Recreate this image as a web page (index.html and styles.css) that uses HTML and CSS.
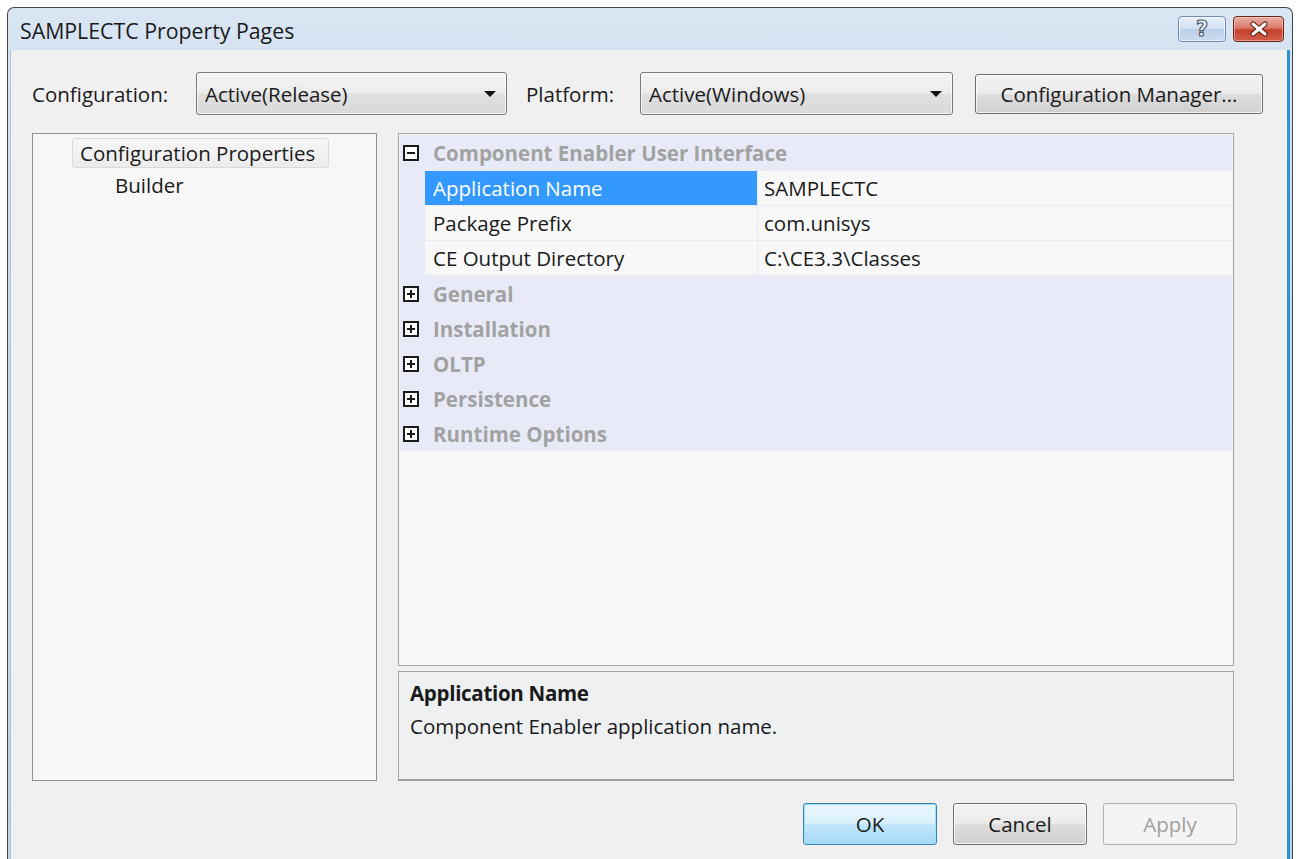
FILE: index.html
```html
<!DOCTYPE html>
<html lang="en">
<head>
<meta charset="utf-8">
<title>SAMPLECTC Property Pages</title>
<link rel="stylesheet" href="styles.css">
</head>
<body>
<div class="window">
  <div class="titlebar">
    <span class="title">SAMPLECTC Property Pages</span>
    <div class="caption-buttons">
      <div class="cap-btn help"><span>?</span></div>
      <div class="cap-btn close">
        <svg width="22" height="16" viewBox="0 0 22 16">
          <path d="M5 3 L17 13 M17 3 L5 13" stroke="#5a1b12" stroke-width="5" stroke-linecap="round"/>
          <path d="M5 3 L17 13 M17 3 L5 13" stroke="#ffffff" stroke-width="3" stroke-linecap="round"/>
        </svg>
      </div>
    </div>
  </div>
  <div class="client">
    <div class="config-row">
      <span class="label label-config">Configuration:</span>
      <div class="combo combo-config"><span>Active(Release)</span><i class="arrow"></i></div>
      <span class="label label-platform">Platform:</span>
      <div class="combo combo-platform"><span>Active(Windows)</span><i class="arrow"></i></div>
      <div class="btn btn-manager">Configuration Manager...</div>
    </div>

    <div class="panels">
      <div class="tree">
        <div class="tree-item selected">Configuration Properties</div>
        <div class="tree-item child">Builder</div>
      </div>

      <div class="right-col">
        <div class="grid">
          <div class="row category">
            <div class="margin"><i class="toggle minus"></i></div>
            <div class="cat-name">Component Enabler User Interface</div>
          </div>
          <div class="row prop">
            <div class="margin"></div>
            <div class="name active">Application Name</div>
            <div class="value">SAMPLECTC</div>
          </div>
          <div class="row prop">
            <div class="margin"></div>
            <div class="name">Package Prefix</div>
            <div class="value">com.unisys</div>
          </div>
          <div class="row prop">
            <div class="margin"></div>
            <div class="name">CE Output Directory</div>
            <div class="value">C:\CE3.3\Classes</div>
          </div>
          <div class="row category">
            <div class="margin"><i class="toggle plus"></i></div>
            <div class="cat-name">General</div>
          </div>
          <div class="row category">
            <div class="margin"><i class="toggle plus"></i></div>
            <div class="cat-name">Installation</div>
          </div>
          <div class="row category">
            <div class="margin"><i class="toggle plus"></i></div>
            <div class="cat-name">OLTP</div>
          </div>
          <div class="row category">
            <div class="margin"><i class="toggle plus"></i></div>
            <div class="cat-name">Persistence</div>
          </div>
          <div class="row category">
            <div class="margin"><i class="toggle plus"></i></div>
            <div class="cat-name">Runtime Options</div>
          </div>
        </div>
        <div class="description">
          <div class="desc-title">Application Name</div>
          <div class="desc-text">Component Enabler application name.</div>
        </div>
      </div>
    </div>

    <div class="actions">
      <div class="btn btn-action default">OK</div>
      <div class="btn btn-action">Cancel</div>
      <div class="btn btn-action disabled">Apply</div>
    </div>
  </div>
</div>
</body>
</html>
```

FILE: styles.css
```css
* { box-sizing: border-box; }

html, body {
  margin: 0;
  padding: 0;
  background: #ffffff;
  overflow: hidden;
}

body {
  font-family: "Open Sans", "Noto Sans", "Liberation Sans", sans-serif;
  font-size: 20.5px;
  color: #1a1a1a;
}

/* outer frame */
.window {
  margin: 7px 3px 0 7px;
  height: 852px;
  border: 1px solid #3e4650;
  border-bottom: 0;
  border-radius: 7px 7px 0 0;
  background: linear-gradient(180deg, #d9e5f3 0%, #c8d9ed 40%, #bfd2ea 100%);
  padding: 0 2px 0 2px;
  display: flex;
  flex-direction: column;
}

.titlebar {
  height: 42px;
  display: flex;
  align-items: flex-start;
  padding-left: 10px;
  flex-shrink: 0;
}

.title {
  margin-top: 8px;
  font-size: 21.3px;
  color: #1b1b1b;
}

.caption-buttons {
  margin-left: auto;
  margin-top: 8px;
  margin-right: 6px;
  display: flex;
  gap: 7px;
}

.cap-btn {
  height: 26px;
  border-radius: 4px;
  display: flex;
  align-items: center;
  justify-content: center;
}

.cap-btn.help {
  width: 48px;
  border: 1px solid #6f8db4;
  background: linear-gradient(180deg, #e9f0f9 0%, #d3e1f1 48%, #bcd0e8 52%, #c9dbef 100%);
  box-shadow: inset 0 0 0 1px rgba(255,255,255,0.6);
}

.cap-btn.help span {
  font-family: "DejaVu Sans", sans-serif;
  font-size: 21px;
  font-weight: bold;
  color: #f2f6fb;
  -webkit-text-stroke: 1.2px #4f5d70;
  line-height: 1;
}

.cap-btn.close {
  width: 51px;
  border: 1px solid #6b2418;
  background: linear-gradient(180deg, #eab0a3 0%, #d9796a 45%, #c4402a 55%, #d2604a 100%);
  box-shadow: inset 0 0 0 1px rgba(255,220,210,0.5);
}

/* client area */
.client {
  flex: 1;
  background: #f0f0f0;
  border-left: 1px solid #a9c6e4;
  border-right: 3px solid #2f93d8;
  padding: 22px 0 0 21px;
}

.config-row {
  display: flex;
  align-items: center;
  height: 43px;
}

.label { color: #1a1a1a; }
.label-config { width: 164px; }
.label-platform { width: 114px; margin-left: 19px; }

.combo {
  height: 43px;
  border: 1px solid #7a7a7a;
  border-radius: 3px;
  background: linear-gradient(180deg, #f4f4f4 0%, #ececec 48%, #e0e0e0 52%, #d9d9d9 100%);
  box-shadow: inset 0 0 0 1px rgba(255,255,255,0.7);
  display: flex;
  align-items: center;
  padding: 0 10px 0 8px;
}
.combo span { flex: 1; }
.combo-config { width: 311px; }
.combo-platform { width: 313px; }

.arrow {
  width: 0;
  height: 0;
  border-left: 6px solid transparent;
  border-right: 6px solid transparent;
  border-top: 6px solid #111;
}

.btn {
  display: flex;
  align-items: center;
  justify-content: center;
  border: 1px solid #707070;
  border-radius: 3px;
  background: linear-gradient(180deg, #f3f3f3 0%, #ebebeb 48%, #dddddd 52%, #d0d0d0 100%);
  box-shadow: inset 0 0 0 1px rgba(255,255,255,0.75);
  color: #1a1a1a;
}

.btn-manager {
  width: 288px;
  height: 40px;
  margin-left: 22px;
}

/* left + right panels */
.panels {
  display: flex;
  gap: 21px;
  margin-top: 18px;
}

.tree {
  width: 345px;
  height: 648px;
  border: 1px solid #8d939c;
  background: #f7f7f7;
  padding-top: 4px;
}

.tree-item {
  height: 30px;
  display: flex;
  align-items: center;
}

.tree-item.selected {
  margin-left: 39px;
  width: 257px;
  padding-left: 7px;
  border: 1px solid #dadada;
  border-radius: 3px;
  background: linear-gradient(180deg, #f6f6f6, #ececec);
}

.tree-item.child {
  margin-left: 82px;
  height: 34px;
}

.right-col {
  width: 836px;
  display: flex;
  flex-direction: column;
  gap: 5px;
}

.grid {
  height: 533px;
  border: 1px solid #a3a3a3;
  padding: 1px;
  background: #f7f7f7;
}

.row {
  height: 35px;
  display: flex;
  background: #e8ebf7;
}

.row.category:first-child { height: 36px; }

.margin {
  width: 25px;
  flex-shrink: 0;
  display: flex;
  align-items: center;
  padding-left: 3px;
}

.toggle {
  position: relative;
  width: 16px;
  height: 16px;
  border: 2px solid #1a1a1a;
  background: #ffffff;
  display: block;
}
.toggle::before {
  content: "";
  position: absolute;
  left: 2px;
  right: 2px;
  top: 5px;
  height: 2px;
  background: #1a1a1a;
}
.toggle.plus::after {
  content: "";
  position: absolute;
  top: 2px;
  bottom: 2px;
  left: 5px;
  width: 2px;
  background: #1a1a1a;
}

.cat-name {
  padding-left: 8px;
  display: flex;
  align-items: center;
  font-weight: bold;
  color: #a2a2a2;
}

.name, .value {
  height: 34px;
  display: flex;
  align-items: center;
  background: #f8f8f8;
}

.name {
  width: 332px;
  margin-right: 1px;
  padding-left: 8px;
}
.name.active {
  background: #3399ff;
  color: #ffffff;
}

.value {
  flex: 1;
  padding-left: 6px;
}

.description {
  height: 110px;
  border: 1px solid #a3a3a3;
  border-bottom: 2px solid #9a9a9a;
  background: #eef0f1;
  padding: 5px 11px;
}

.desc-title {
  font-weight: bold;
  height: 32px;
  display: flex;
  align-items: center;
  letter-spacing: -0.3px;
}

.desc-text {
  height: 34px;
  display: flex;
  align-items: center;
}

/* dialog buttons */
.actions {
  width: 1205px;
  display: flex;
  justify-content: flex-end;
  gap: 16px;
  margin-top: 22px;
}

.btn-action {
  width: 134px;
  height: 42px;
}

.btn-action.default {
  border-color: #3c7fb1;
  background: linear-gradient(180deg, #eaf6fd 0%, #d9f0fc 48%, #bee6fd 52%, #a7d9f5 100%);
  box-shadow: inset 0 0 0 1px #9be0ff;
}

.btn-action.disabled {
  border-color: #adb2b5;
  background: #f4f4f4;
  box-shadow: none;
  color: #a0a0a0;
}
```
